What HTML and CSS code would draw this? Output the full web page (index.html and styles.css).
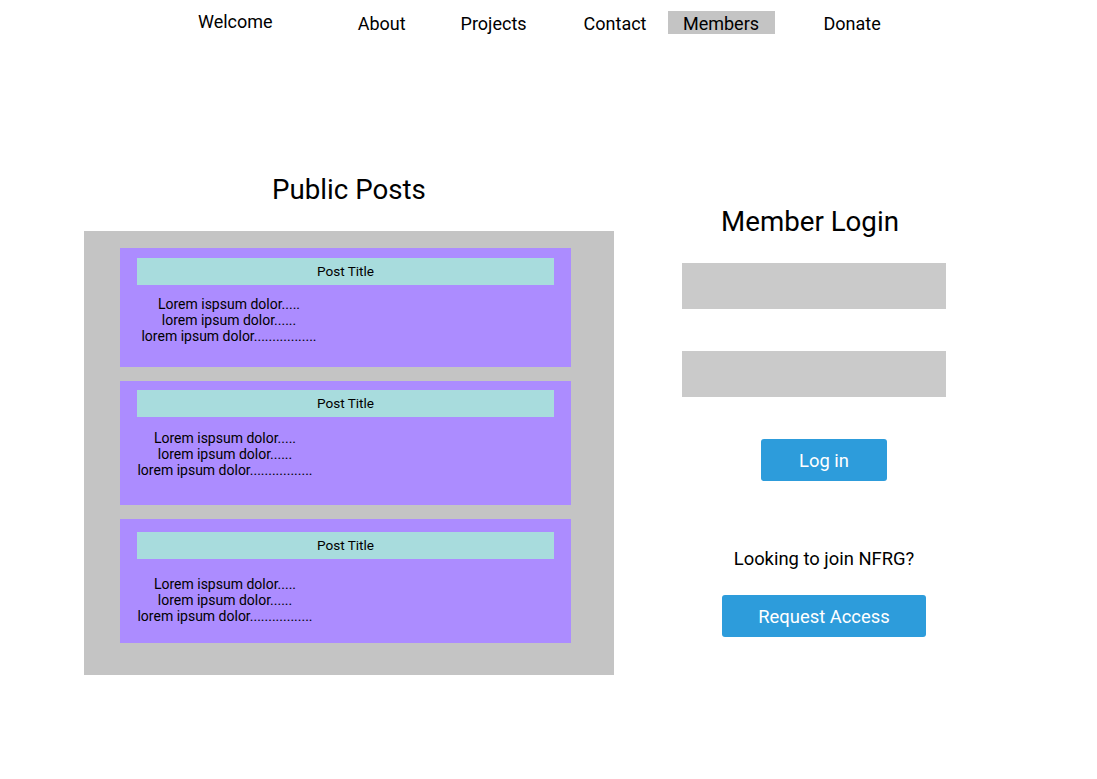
FILE: index.html
```html
<!DOCTYPE html>
<html>
<head>
<meta charset="utf-8">
<link rel="stylesheet" href="styles.css">
</head>
<body>
<nav class="nav">
  <a class="nav-item nav-welcome">Welcome</a>
  <a class="nav-item nav-about">About</a>
  <a class="nav-item nav-projects">Projects</a>
  <a class="nav-item nav-contact">Contact</a>
  <a class="nav-item nav-members">Members</a>
  <a class="nav-item nav-donate">Donate</a>
</nav>
<main class="main">
  <section class="posts">
    <h2 class="posts-heading">Public Posts</h2>
    <div class="posts-box">
      <article class="post post-1">
        <div class="post-title">Post Title</div>
        <p class="post-body">Lorem ispsum dolor.....<br>lorem ipsum dolor......<br>lorem ipsum dolor.................</p>
      </article>
      <article class="post post-2">
        <div class="post-title">Post Title</div>
        <p class="post-body">Lorem ispsum dolor.....<br>lorem ipsum dolor......<br>lorem ipsum dolor.................</p>
      </article>
      <article class="post post-3">
        <div class="post-title">Post Title</div>
        <p class="post-body">Lorem ispsum dolor.....<br>lorem ipsum dolor......<br>lorem ipsum dolor.................</p>
      </article>
    </div>
  </section>
  <section class="login">
    <h2 class="login-heading">Member Login</h2>
    <div class="field"></div>
    <div class="field field-2"></div>
    <button class="btn btn-login">Log in</button>
    <p class="join">Looking to join NFRG?</p>
    <button class="btn btn-request">Request Access</button>
  </section>
</main>
</body>
</html>
```
FILE: styles.css
```css
* { box-sizing: border-box; }
body {
  margin: 0;
  font-family: Roboto, "Noto Sans", sans-serif;
  color: #000;
  background: #fff;
  width: 1097px;
}
.nav {
  display: flex;
  align-items: flex-start;
  padding-left: 198px;
  height: 40px;
}
.nav-item {
  font-size: 18px;
  line-height: 21px;
  margin-top: 13px;
  color: #000;
}
.nav-welcome { margin-top: 11px; }
.nav-about { margin-left: 85px; }
.nav-projects { margin-left: 55px; }
.nav-contact { margin-left: 57px; }
.nav-members {
  margin-top: 11px;
  margin-left: 21px;
  width: 107px;
  height: 23px;
  padding-top: 2px;
  text-align: center;
  background: #c4c4c4;
}
.nav-donate { margin-left: 49px; }

.main {
  display: flex;
  align-items: flex-start;
  padding-left: 84px;
  margin-top: 132px;
}
.posts {
  width: 530px;
}
.posts-heading {
  margin: 0;
  height: 59px;
  font-weight: 400;
  font-size: 27.7px;
  line-height: 36px;
  text-align: center;
}
.posts-box {
  background: #c4c4c4;
  padding: 17px 43px 32px 36px;
  display: flex;
  flex-direction: column;
  gap: 14px;
}
.post {
  background: #ac8cff;
  padding: 10px 17px 0 17px;
  height: 124px;
}
.post-1 { height: 119px; }
.post-2 { padding-top: 9px; }
.post-3 { padding-top: 13px; }
.post-title {
  background: #a8dcdd;
  height: 27px;
  line-height: 27px;
  text-align: center;
  font-size: 13.6px;
}
.post-body {
  margin: 11px 0 0 -2px;
  width: 180px;
  text-align: center;
  font-size: 14px;
  line-height: 16px;
}
.post-1 .post-body { margin-left: 2px; }
.post-2 .post-body { margin-top: 13px; }
.post-3 .post-body { margin-top: 17px; }

.login {
  margin-left: 68px;
  width: 264px;
  display: flex;
  flex-direction: column;
  align-items: center;
  padding-top: 32px;
}
.login-heading {
  margin: 0 8px 0 0;
  font-weight: 400;
  font-size: 27.7px;
  line-height: 36px;
  height: 42px;
}
.field {
  align-self: stretch;
  height: 46px;
  background: #cacaca;
  margin-top: 17px;
}
.field-2 { margin-top: 42px; }
.btn {
  font-family: Roboto, "Noto Sans", sans-serif;
  border: none;
  border-radius: 3px;
  background: #2d9cdb;
  color: #fff;
  font-size: 18.4px;
  height: 42px;
  padding: 0;
  margin-left: 20px;
}
.btn-login {
  width: 126px;
  margin-top: 42px;
}
.join {
  margin: 67px 0 0 20px;
  font-size: 18.4px;
  line-height: 22px;
}
.btn-request {
  width: 204px;
  margin-top: 25px;
}
```
